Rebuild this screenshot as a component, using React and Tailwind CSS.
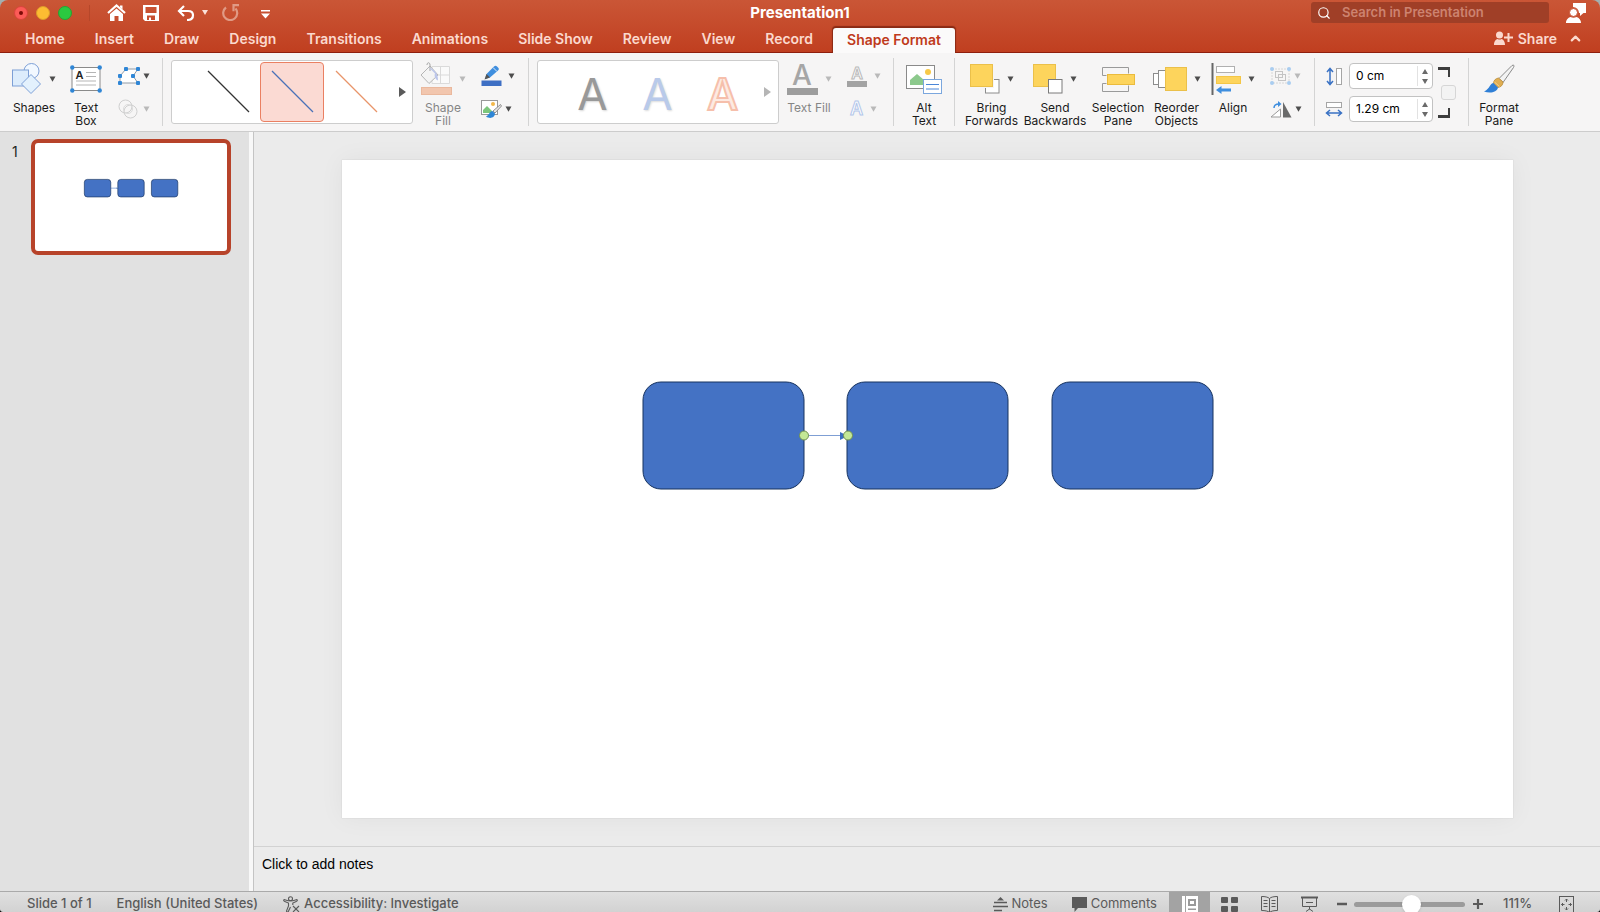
import { useState } from "react";
import { ChevronUp, Search } from "lucide-react";

const TABS = ["Home", "Insert", "Draw", "Design", "Transitions", "Animations", "Slide Show", "Review", "View", "Record"];

const BOXES = [301, 505, 710];

function Caret({ dim }) {
  return (
    <svg width="7" height="6" viewBox="0 0 7 6" className={dim ? "text-[#b9b9b9]" : "text-[#4d4d4d]"} aria-hidden>
      <path d="M0.5 0.5h6L3.5 5.8z" fill="currentColor" />
    </svg>
  );
}

function Separator() {
  return <div className="mt-[5px] h-[68px] w-px shrink-0 bg-[#d4d4d4]" />;
}

function RibbonButton({ icon, label, caret, disabled, className }) {
  return (
    <button disabled={disabled} className={`flex shrink-0 flex-col items-center pt-2 ${className}`}>
      <span className="flex h-9 items-center gap-[7px]">
        {icon}
        {caret && <Caret dim={disabled} />}
      </span>
      <span className={`mt-1 text-center text-[12px] leading-[13px] whitespace-pre ${disabled ? "text-[#858585]" : "text-[#1a1a1a]"}`}>
        {label}
      </span>
    </button>
  );
}

function SmallButton({ icon, label, disabled, tight }) {
  return (
    <button aria-label={label} disabled={disabled} className={`flex h-7 items-center ${tight ? "gap-[3px]" : "gap-[6px]"}`}>
      {icon}
      <Caret dim={disabled} />
    </button>
  );
}

/* ---------- ribbon icons ---------- */

function ShapesIcon() {
  return (
    <svg width="30" height="32" viewBox="0 0 30 32" fill="#f2f8ff" stroke="#7d9fd6">
      <circle cx="19.500" cy="8" r="7.500" />
      <rect x="0.500" y="7" width="16" height="16" fill="#dcecfc" />
      <path d="M19 11.500l9.500 9.500-9.500 9.500-9.500-9.500z" fill="#e3f1fd" />
    </svg>
  );
}

function TextBoxIcon() {
  return (
    <svg width="32" height="28" viewBox="0 0 32 28">
      <rect x="2" y="2.500" width="28" height="23" fill="#fff" stroke="#8a8a8a" />
      <path d="M16 7.500h10M16 11.500h10M6 16h20M6 20h20" stroke="#b5b5b5" />
      <text x="5.500" y="13.500" fontSize="11" fontWeight="600" fill="#222">A</text>
      <g fill="#2f86d6">
        <circle cx="2.300" cy="2.500" r="2.200" />
        <circle cx="29.700" cy="2.500" r="2.200" />
        <circle cx="2.300" cy="25.500" r="2.200" />
        <circle cx="29.700" cy="25.500" r="2.200" />
      </g>
    </svg>
  );
}

function EditPointsIcon() {
  return (
    <svg width="22" height="18" viewBox="0 0 22 18">
      <path d="M2 16V9l6-7h12l-5 7 5 7z" fill="#fff" stroke="#8f9aa6" />
      <g fill="#2f86d6">
        <rect x="0" y="14" width="4" height="4" rx="1" />
        <rect x="0" y="7" width="4" height="4" rx="1" />
        <rect x="6" y="0" width="4" height="4" rx="1" />
        <rect x="18" y="0" width="4" height="4" rx="1" />
        <rect x="13" y="7" width="4" height="4" rx="1" />
        <rect x="18" y="14" width="4" height="4" rx="1" />
      </g>
    </svg>
  );
}

function MergeIcon() {
  return (
    <svg width="22" height="20" viewBox="0 0 22 20" fill="none" stroke="#cfcfcf">
      <circle cx="7.500" cy="7.500" r="6.500" />
      <circle cx="12.500" cy="12.500" r="6.500" />
      <circle cx="10" cy="10" r="4.500" stroke="#dcdcdc" />
    </svg>
  );
}

function FillIcon() {
  return (
    <svg width="32" height="34" viewBox="0 0 32 34">
      <path d="M12 4.500h17.500v17H12zM12 13h17M20.500 4.500v17" fill="#fafafa" stroke="#dadada" />
      <path d="M1 13l9-9 8 9-9 8.500z" fill="#f4f4f4" stroke="#b5b5b5" />
      <path d="M10 9V3c0-3-3-3-3 0" fill="none" stroke="#a5a5a5" />
      <path d="M9 5.500c6 2 9 6 9 13-3-1-4-5-3-7z" fill="#bcc6ea" />
      <rect x="1.500" y="25.500" width="30" height="7" fill="#f2c6ae" stroke="#eab89d" />
    </svg>
  );
}

function OutlineIcon() {
  return (
    <svg width="21" height="22" viewBox="0 0 21 22">
      <path d="M4 14l1.500-5L13 1.500a2 2 0 0 1 3 0l1 1a2 2 0 0 1 0 3L9 12.500z" fill="#3f8ede" />
      <path d="M12 2.500l4 4" stroke="#dcecfb" />
      <path d="M3.500 14.500L5.500 9 9 12.500z" fill="#555" />
      <rect x="0.500" y="15.500" width="20" height="5.500" fill="#3e6fc4" />
    </svg>
  );
}

function PictureBrushIcon() {
  return (
    <svg width="21" height="21" viewBox="0 0 21 21">
      <rect x="0.500" y="1.500" width="16" height="14" fill="#fff" stroke="#999" />
      <path d="M2 14V11l4-4 5 5v2z" fill="#7cc67c" />
      <circle cx="12" cy="5" r="2" fill="#f2b84b" />
      <path d="M19.500 5.500L12 12l2 2 6.500-7z" fill="#e6e6e6" stroke="#777" strokeWidth="0.800" />
      <path d="M11.500 12c-3 0-3 4-6.500 5.500 4 3 9 1 9-3z" fill="#2f86d6" />
    </svg>
  );
}

function TextFillIcon() {
  return (
    <span className="flex w-8 flex-col items-center">
      <span className="text-[28px] leading-[25px] font-medium text-[#a6a6a6]">A</span>
      <span className="h-[7px] w-[31px] bg-[#9d9d9d]" />
    </span>
  );
}

function TextOutlineIcon() {
  return (
    <span className="flex w-[22px] flex-col items-center">
      <span className="text-[16px] leading-[16px] font-semibold text-white [-webkit-text-stroke:1px_#b9b9b9]">A</span>
      <span className="h-[6px] w-5 bg-[#a3a3a3]" />
    </span>
  );
}

function TextEffectsIcon() {
  return (
    <span className="w-[21px] text-center text-[18px] leading-[20px] font-semibold text-white [-webkit-text-stroke:1px_#b3c6ea]">A</span>
  );
}

function AltTextIcon() {
  return (
    <svg width="36" height="32" viewBox="0 0 36 32">
      <rect x="0.500" y="2.500" width="28" height="23" fill="#fff" stroke="#8a8a8a" />
      <path d="M4 22v-5l7-6 7 6v5z" fill="#8cc98c" />
      <circle cx="22" cy="9" r="3" fill="#f7c948" />
      <rect x="17.500" y="16.500" width="18" height="14" fill="#fff" stroke="#7ba7de" />
      <path d="M20 21.500h13M20 26h13" stroke="#4a86d8" />
    </svg>
  );
}

function BringIcon() {
  return (
    <svg width="30" height="30" viewBox="0 0 30 30">
      <rect x="15.500" y="15.500" width="13.500" height="13.500" fill="#fff" stroke="#8c8c8c" />
      <rect x="0" y="0" width="24" height="24" fill="#f6f5f5" />
      <rect x="0.500" y="0.500" width="22" height="22" fill="#fdd45c" stroke="#ebc04a" />
    </svg>
  );
}

function SendIcon() {
  return (
    <svg width="30" height="30" viewBox="0 0 30 30">
      <rect x="0.500" y="0.500" width="22" height="22" fill="#fdd45c" stroke="#ebc04a" />
      <rect x="15.500" y="15.500" width="13.500" height="13.500" fill="#fff" stroke="#7a7a7a" />
    </svg>
  );
}

function SelectionPaneIcon() {
  return (
    <svg width="34" height="28" viewBox="0 0 34 28">
      <path d="M1.500 10.500v-8h26v6M1.500 10.500h4M1.500 18.500v8h26v-6M1.500 18.500h4" fill="none" stroke="#9a9a9a" />
      <rect x="6.500" y="9.500" width="27" height="10" fill="#fdd45c" stroke="#ebbb3c" />
    </svg>
  );
}

function ReorderIcon() {
  return (
    <svg width="34" height="26" viewBox="0 0 34 26">
      <rect x="0.500" y="7.500" width="6" height="11" fill="#fff" stroke="#8c8c8c" />
      <rect x="5.500" y="4.500" width="7" height="17" fill="#fff" stroke="#8c8c8c" />
      <rect x="12.500" y="1.500" width="21" height="23" fill="#fdd45c" stroke="#ebc04a" />
    </svg>
  );
}

function AlignIcon() {
  return (
    <svg width="30" height="32" viewBox="0 0 30 32">
      <path d="M1.500 0v32" stroke="#666" strokeWidth="2" />
      <rect x="5.500" y="3.500" width="18" height="6" fill="#fff" stroke="#b0b0b0" />
      <rect x="5.500" y="13.500" width="24" height="7" fill="#fdd45c" stroke="#f4c646" />
      <path d="M5 27l5.500-4v2.500H20v3h-9.500V31z" fill="#3f8ede" />
    </svg>
  );
}

function GroupIcon() {
  return (
    <svg width="21" height="18" viewBox="0 0 21 18" fill="none">
      <rect x="2" y="2" width="17" height="14" stroke="#d6d6d6" strokeDasharray="2 1" />
      <rect x="5.500" y="4.500" width="7" height="6" stroke="#c4c4c4" />
      <rect x="8.500" y="7.500" width="7" height="6" stroke="#c4c4c4" />
      <g fill="#a9cdf0">
        <circle cx="2" cy="2" r="2" />
        <circle cx="19" cy="2" r="2" />
        <circle cx="2" cy="16" r="2" />
        <circle cx="19" cy="16" r="2" />
      </g>
    </svg>
  );
}

function RotateIcon() {
  return (
    <svg width="22" height="17" viewBox="0 0 22 17">
      <path d="M10.500 8v8H1z" fill="#fff" stroke="#9a9a9a" />
      <path d="M13 1v15.500h8.500z" fill="#6b6b6b" />
      <path d="M4 7c0-3 2-4 5-4" fill="none" stroke="#3f8ede" strokeWidth="1.500" />
      <path d="M8 0l3.500 3L8 6z" fill="#3f8ede" />
    </svg>
  );
}

function HeightIcon() {
  return (
    <svg width="18" height="19" viewBox="0 0 18 19">
      <rect x="11.500" y="1.500" width="5" height="16" fill="#fff" stroke="#a5a5a5" />
      <path d="M5 2v15M2 5l3-3.500L8 5M2 14l3 3.500L8 14" fill="none" stroke="#3a72c4" strokeWidth="1.500" />
    </svg>
  );
}

function WidthIcon() {
  return (
    <svg width="18" height="19" viewBox="0 0 18 19">
      <rect x="1.500" y="2.500" width="15" height="5" fill="#fff" stroke="#a5a5a5" />
      <path d="M1.500 13h15M5 10l-3.500 3L5 16M13 10l3.500 3-3.500 3" fill="none" stroke="#3a72c4" strokeWidth="1.500" />
    </svg>
  );
}

function FormatPaneIcon() {
  return (
    <svg width="32" height="30" viewBox="0 0 32 30">
      <path d="M29 1.500c2-1 2.500 0 1.500 2L20 18.500l-4-4z" fill="#f3f3f3" stroke="#8a8a8a" />
      <path d="M15.500 14c-3 .500-5 2.500-5 5.500l4.500 4c3-.500 5-2.500 5-5.500z" fill="#e0ae52" stroke="#b98a35" strokeWidth="0.800" />
      <path d="M10.500 19C7 19 7 25 1 27.500c6 2 13 1 14-4z" fill="#2f7fd6" />
      <path d="M11.500 18l5 4.500" stroke="#f5d28a" />
    </svg>
  );
}

/* ---------- window chrome ---------- */

function TitleBar() {
  return (
    <div className="grid h-[25px] grid-cols-[1fr_auto_1fr] items-center">
      <div className="flex h-6 items-center">
        <div className="ml-[14px] flex gap-2">
          <button aria-label="Close" className="flex size-[14px] items-center justify-center rounded-full border border-[#d9443c] bg-[#fc5b57]">
            <span className="size-1 rounded-full bg-[#7d0a06]" />
          </button>
          <button aria-label="Minimise" className="size-[14px] rounded-full border border-[#dc9a2c] bg-[#fdbc32]" />
          <button aria-label="Full screen" className="size-[14px] rounded-full border border-[#27a232] bg-[#2bc840]" />
        </div>
        <div className="ml-[17px] h-4 w-px bg-[#b6472a]" />
        <button aria-label="Home" className="ml-[17px]">
          <svg width="19" height="18" viewBox="0 0 19 18">
            <path d="M1 9l8.500-7.500L18 9" fill="none" stroke="#fff" strokeWidth="2.200" />
            <path d="M3 10l6.500-5.600L16 10v7h-4.500v-5h-4v5H3zM13 1.500h2.500v4L13 3.300z" fill="#fff" />
          </svg>
        </button>
        <button aria-label="Save" className="ml-[17px]">
          <svg width="16" height="16" viewBox="0 0 16 16">
            <path d="M0 0h16v16H2l-2-2zM2.500 2v6h11V2zM4 10.500V15h2v-2.500h2V15h4v-4.500z" fill="#fff" fillRule="evenodd" />
          </svg>
        </button>
        <button aria-label="Undo" className="ml-[18px] flex items-center gap-[7px]">
          <svg width="18" height="16" viewBox="0 0 18 16" fill="none" stroke="#fff" strokeWidth="2.200">
            <path d="M7 1L2 6l5 5" />
            <path d="M2 6h9c3 0 5 1.500 5 4.200S14 15 10 15" />
          </svg>
          <svg width="6" height="5" viewBox="0 0 6 5"><path d="M0 0h6L3 5z" fill="#fbe0d8" /></svg>
        </button>
        <button aria-label="Redo" disabled className="ml-[14px]">
          <svg width="18" height="17" viewBox="0 0 18 17" fill="none" stroke="#e09a85" strokeWidth="2.200">
            <path d="M4 3.500a7 7 0 1 0 9.500 1" />
            <path d="M17 1.200h-5.500v6" />
          </svg>
        </button>
        <button aria-label="Customise toolbar" className="mt-[3px] ml-[21px]">
          <svg width="9" height="9" viewBox="0 0 9 9"><path d="M0 0h9v1.500H0zM0 3.500h9L4.500 8.500z" fill="#fff" /></svg>
        </button>
      </div>
      <h1 className="text-[15px] leading-[24px] font-bold text-white">Presentation1</h1>
      <div className="flex items-center justify-end pr-[14px]">
        <label className="flex h-[21px] w-[238px] items-center rounded-[3px] bg-[#a03f27] pl-[6px]">
          <Search className="size-[14px] text-white" aria-hidden />
          <input
            type="search"
            aria-label="Search in Presentation"
            placeholder="Search in Presentation"
            className="ml-[11px] w-[190px] bg-transparent text-[13px] font-semibold text-white outline-none placeholder:text-[#cd8370]"
          />
        </label>
        <button aria-label="Account" className="ml-[17px]">
          <svg width="20" height="21" viewBox="0 0 20 21" fill="#fff">
            <path d="M7 1h13v10h-2.500L14 14v-3h-1A6 6 0 0 0 7 5z" />
            <circle cx="7.500" cy="10.500" r="4" stroke="#c74f30" />
            <path d="M0 21c0-4 3-5.500 4.500-6 2 1 4 1 6 0 1.500.500 4.500 2 4.500 6z" />
          </svg>
        </button>
      </div>
    </div>
  );
}

function TabBar() {
  return (
    <div className="flex h-7 items-end border-b border-[#8f1f0d]">
      <nav className="flex items-end pl-[10px] text-[14px] font-semibold text-[#fbd9ce]">
        {TABS.map((t) => (
          <button key={t} className="h-7 px-[15px] whitespace-nowrap">{t}</button>
        ))}
        <button className="-mb-px ml-[5px] h-[25px] rounded-t-[3px] bg-[#fbfafa] px-[14px] pb-[3px] whitespace-nowrap text-[#bf3a1c] shadow-[0_-1px_1px_1px_#8a2a14]">
          Shape Format
        </button>
      </nav>
      <div className="ml-auto flex h-7 items-center pr-[17px] text-[#fbd9ce]">
        <button className="flex items-center gap-[5px] text-[14px] font-semibold">
          <svg width="19" height="14" viewBox="0 0 19 14" fill="currentColor">
            <circle cx="5.500" cy="4" r="3.500" />
            <path d="M0 14c0-4 2-5.500 3.500-6 1.500.700 3 .700 4 0C9 8.500 11 10 11 14zM13.500 2h2v3.500H19v2h-3.500V11h-2V7.500H10v-2h3.500z" />
          </svg>
          Share
        </button>
        <button aria-label="Collapse ribbon" className="ml-[11px]">
          <ChevronUp className="size-[15px]" strokeWidth={3.5} />
        </button>
      </div>
    </div>
  );
}

function LineGallery() {
  const [picked, setPicked] = useState(1);
  const colors = ["#333333", "#4a72b8", "#e8956a"];
  return (
    <div className="mt-[7px] ml-2 flex h-16 w-[242px] shrink-0 items-center rounded-[3px] border border-[#cdcdcd] bg-white pl-6">
      {colors.map((c, i) => (
        <button
          key={c}
          aria-label={`Line style ${i + 1}`}
          onClick={() => setPicked(i)}
          className={`flex h-[60px] w-16 shrink-0 items-center justify-center rounded-[4px] border ${picked === i ? "border-[#ea8062] bg-[#fbdad3]" : "border-transparent"}`}
        >
          <svg width="44" height="44" viewBox="0 0 44 44">
            <path d="M2 1l41 41" stroke={c} strokeWidth="1.200" />
          </svg>
        </button>
      ))}
      <button aria-label="More line styles" className="ml-[11px]">
        <svg width="7" height="10" viewBox="0 0 7 10"><path d="M0 0l7 5-7 5z" fill="#5a5a5a" /></svg>
      </button>
    </div>
  );
}

function WordArtGallery() {
  return (
    <div className="mt-[7px] ml-2 flex h-16 w-[242px] shrink-0 items-center rounded-[3px] border border-[#cdcdcd] bg-white pl-[22px] text-[44px] leading-none">
      <button disabled className="w-[65px] pt-1 text-[#999999] [text-shadow:1px_1px_2px_#d5d5d5]">A</button>
      <button disabled className="w-[65px] pt-1 text-[#b9caea] [text-shadow:1px_1px_2px_#dcdcdc]">A</button>
      <button disabled className="w-[65px] pt-1 font-medium text-[#fdeae2] [-webkit-text-stroke:2px_#f6bfab]">A</button>
      <button aria-label="More text styles" disabled className="ml-[9px]">
        <svg width="7" height="10" viewBox="0 0 7 10"><path d="M0 0l7 5-7 5z" fill="#b5b5b5" /></svg>
      </button>
    </div>
  );
}

function SizeField({ icon, label, initial }) {
  const [value, setValue] = useState(initial);
  return (
    <div className="flex items-center gap-[6px]">
      {icon}
      <div className="flex h-[26px] w-[84px] rounded-[4px] border border-[#c2c2c2] bg-white">
        <input
          aria-label={label}
          value={value}
          onChange={(e) => setValue(e.target.value)}
          className="w-[67px] bg-transparent pl-[6px] text-[12px] text-black outline-none"
        />
        <div className="my-[2px] flex w-[15px] flex-col items-center justify-around border-l border-[#e2e2e2]">
          <button aria-label={`Increase ${label}`}>
            <svg width="6" height="5" viewBox="0 0 6 5" className="block"><path d="M0 5h6L3 0z" fill="#6a6a6a" /></svg>
          </button>
          <button aria-label={`Decrease ${label}`}>
            <svg width="6" height="5" viewBox="0 0 6 5" className="block"><path d="M0 0h6L3 5z" fill="#6a6a6a" /></svg>
          </button>
        </div>
      </div>
    </div>
  );
}

function Ribbon() {
  return (
    <div className="flex h-[79px] items-start border-b border-[#cccccc] bg-[#f6f5f5]">
      <RibbonButton icon={<ShapesIcon />} label="Shapes" caret className="ml-[5px] w-[58px]" />
      <RibbonButton icon={<TextBoxIcon />} label={"Text\nBox"} className="w-[46px]" />
      <div className="flex w-[53px] shrink-0 flex-col gap-[5px] pt-[9px] pl-[9px]">
        <SmallButton icon={<EditPointsIcon />} label="Edit shape" tight />
        <SmallButton icon={<MergeIcon />} label="Merge shapes" disabled tight />
      </div>
      <Separator />
      <LineGallery />
      <RibbonButton icon={<FillIcon />} label={"Shape\nFill"} caret disabled className="w-[60px]" />
      <div className="flex w-[55px] shrink-0 flex-col gap-[5px] pt-[9px] pl-2">
        <SmallButton icon={<OutlineIcon />} label="Shape outline" />
        <SmallButton icon={<PictureBrushIcon />} label="Shape effects" tight />
      </div>
      <Separator />
      <WordArtGallery />
      <RibbonButton icon={<TextFillIcon />} label="Text Fill" caret disabled className="w-[60px]" />
      <div className="flex w-[54px] shrink-0 flex-col gap-[5px] pt-[9px] pl-[7px]">
        <SmallButton icon={<TextOutlineIcon />} label="Text outline" disabled />
        <SmallButton icon={<TextEffectsIcon />} label="Text effects" disabled tight />
      </div>
      <Separator />
      <RibbonButton icon={<AltTextIcon />} label={"Alt\nText"} className="w-[60px]" />
      <Separator />
      <RibbonButton icon={<BringIcon />} label={"Bring\nForwards"} caret className="ml-[6px] w-[61px]" />
      <RibbonButton icon={<SendIcon />} label={"Send\nBackwards"} caret className="w-[66px]" />
      <RibbonButton icon={<SelectionPaneIcon />} label={"Selection\nPane"} className="w-[60px]" />
      <RibbonButton icon={<ReorderIcon />} label={"Reorder\nObjects"} caret className="w-[57px]" />
      <RibbonButton icon={<AlignIcon />} label="Align" caret className="w-[56px]" />
      <div className="flex w-[53px] shrink-0 flex-col gap-[5px] pt-[9px] pl-[9px]">
        <SmallButton icon={<GroupIcon />} label="Group" disabled tight />
        <SmallButton icon={<RotateIcon />} label="Rotate" tight />
      </div>
      <Separator />
      <div className="flex w-[153px] shrink-0 gap-[5px] pt-[10px] pl-[10px]">
        <div className="flex flex-col gap-[7px]">
          <SizeField icon={<HeightIcon />} label="Height" initial="0 cm" />
          <SizeField icon={<WidthIcon />} label="Width" initial="1.29 cm" />
        </div>
        <div className="mt-1 flex flex-col">
          <div className="h-[10px] w-3 border-t-[3px] border-r-2 border-[#3d3d3d]" />
          <input
            type="checkbox"
            aria-label="Lock aspect ratio"
            className="my-2 ml-[3px] size-[15px] appearance-none rounded-[3px] border border-[#d6d6d6] bg-[#f3f3f3]"
          />
          <div className="h-[10px] w-3 border-r-2 border-b-[3px] border-[#3d3d3d]" />
        </div>
      </div>
      <Separator />
      <RibbonButton icon={<FormatPaneIcon />} label={"Format\nPane"} className="w-[60px]" />
    </div>
  );
}

/* ---------- slide ---------- */

function SlideDrawing({ selected }) {
  return (
    <svg viewBox="0 0 1171 658" className="block w-full" aria-label="Three boxes joined by a connector">
      <path d="M462 275.500h38" stroke="#7f9fd4" strokeWidth={selected ? 1 : 5} />
      <path d="M498 272l8 4-8 4z" fill="#3b6fc0" />
      {BOXES.map((x) => (
        <rect key={x} x={x} y="222" width="161" height="107" rx="18" fill="#4472c4" stroke="#17335f" strokeWidth={selected ? 1 : 4} />
      ))}
      {selected && (
        <g fill="#c3e896" stroke="#6f8f52">
          <circle cx="462" cy="275.500" r="4.500" />
          <circle cx="506" cy="275.500" r="4.500" />
        </g>
      )}
    </svg>
  );
}

function Workspace() {
  return (
    <div className="flex flex-1">
      <aside className="w-[249px] shrink-0 bg-[#e1e1e1]">
        <div className="flex pt-[7px]">
          <span className="w-[31px] pt-[3px] pl-3 text-[14px] leading-[20px] text-[#222]">1</span>
          <button aria-label="Slide 1" className="w-[200px] overflow-hidden rounded-[7px] border-[4px] border-[#b7432a] bg-white">
            <SlideDrawing />
          </button>
        </div>
      </aside>
      <div className="w-[5px] shrink-0 border-r border-[#c4c4c4] bg-[#f8f8f8]" />
      <div className="flex min-w-0 flex-1 flex-col bg-[#ebebeb]">
        <main className="flex-1 pt-7 pr-[87px] pb-[27px] pl-[88px]">
          <div className="bg-white shadow-[0_0_1px_#bbbbbb,0_0_24px_rgba(0,0,0,0.05)]">
            <SlideDrawing selected />
          </div>
        </main>
        <div className="h-[45px] border-t border-[#d2d2d2] pt-[7px] pl-2">
          <textarea
            aria-label="Notes"
            placeholder="Click to add notes"
            rows={1}
            className="block w-full resize-none bg-transparent font-['Liberation_Sans',Arial,sans-serif] text-[14px] leading-[20px] outline-none placeholder:text-black"
          />
        </div>
      </div>
    </div>
  );
}

/* ---------- status bar ---------- */

function StatusBar() {
  const [zoom, setZoom] = useState(52);
  return (
    <footer className="h-[21px] overflow-hidden border-t border-[#aaaaaa] bg-linear-to-b from-[#e0e0e0] to-[#d2d2d2] text-[13px] text-[#5a5a5a]">
      <div className="flex h-6 items-center whitespace-nowrap">
        <div className="flex items-center gap-[25px] pl-[27px] font-medium">
          <span>Slide 1 of 1</span>
          <button>English (United States)</button>
          <button className="flex items-center gap-1">
            <svg width="17" height="17" viewBox="0 0 17 17" fill="none" stroke="currentColor" strokeWidth="1.100">
              <circle cx="7.500" cy="2.800" r="2" />
              <path d="M1 3.500c-.800 1 0 1.600.800 1.900L5.500 7v3L3.500 15c0 1.200 1.400 1.400 1.800.500L7.500 11M14 3.500c.800 1 0 1.600-.800 1.900L9.800 7v2M1 3.500l4 1.300h5l4-1.300M10 10l6 6M16 10l-6 6" />
            </svg>
            Accessibility: Investigate
          </button>
        </div>
        <div className="ml-auto flex h-6 items-center">
          <button className="flex items-center gap-1">
            <svg width="15" height="16" viewBox="0 0 15 16">
              <path d="M4 4.500L7.500 1 11 4.500z" fill="currentColor" />
              <path d="M1 6.500h13M0 10.500h15M1 14.500h8" stroke="currentColor" strokeWidth="1.500" />
            </svg>
            Notes
          </button>
          <button className="ml-6 flex items-center gap-1">
            <svg width="15" height="15" viewBox="0 0 15 15"><path d="M0 0h15v11H6l-3.500 4v-4H0z" fill="currentColor" /></svg>
            Comments
          </button>
          <button aria-label="Normal view" className="ml-3 flex h-6 w-[41px] items-center justify-center bg-[#a3a3a3]">
            <svg width="16" height="17" viewBox="0 0 16 17">
              <path d="M0 0h16v17H0z" fill="#fff" />
              <path d="M3.500 0v17" stroke="#a3a3a3" />
              <path d="M6 3h8v7H6zM6 12.500h8V14H6z" fill="#9a9a9a" />
              <path d="M8 5h4v3H8z" fill="#fff" />
            </svg>
          </button>
          <button aria-label="Slide sorter" className="ml-[11px]">
            <svg width="17" height="15" viewBox="0 0 17 15" fill="currentColor">
              <rect width="7" height="6" rx="1" />
              <rect x="10" width="7" height="6" rx="1" />
              <rect y="9" width="7" height="6" rx="1" />
              <rect x="10" y="9" width="7" height="6" rx="1" />
            </svg>
          </button>
          <button aria-label="Reading view" className="ml-[23px]">
            <svg width="17" height="17" viewBox="0 0 17 17" fill="none" stroke="currentColor">
              <path d="M8.500 2.500C7 1 4 .500.500.500v14c3.500 0 6.500.500 8 2 1.500-1.500 4.500-2 8-2V.500c-3.500 0-6.500.500-8 2zv14" />
              <path d="M2.500 4.500h4M2.500 7.500h4M2.500 10.500h4M10.500 4.500h4M10.500 7.500h4M10.500 10.500h4" />
            </svg>
          </button>
          <button aria-label="Slide show" className="ml-[23px]">
            <svg width="17" height="16" viewBox="0 0 17 16" fill="none" stroke="currentColor">
              <path d="M0 1.500h17" strokeWidth="2" />
              <path d="M1.500 2v8.500h14V2M5 6.500h7M8.500 10.500v3M5 15.500l3.500-2.500 3.500 2.500" />
            </svg>
          </button>
          <button aria-label="Zoom out" className="ml-[19px]">
            <svg width="10" height="10" viewBox="0 0 10 10"><path d="M0 5h10" stroke="currentColor" strokeWidth="2.500" /></svg>
          </button>
          <input
            type="range"
            aria-label="Zoom"
            min="0"
            max="100"
            value={zoom}
            onChange={(e) => setZoom(Number(e.target.value))}
            className="ml-[7px] h-[5px] w-[111px] appearance-none rounded-full bg-[#9b9b9b] [&::-webkit-slider-thumb]:size-[19px] [&::-webkit-slider-thumb]:appearance-none [&::-webkit-slider-thumb]:rounded-full [&::-webkit-slider-thumb]:bg-white [&::-webkit-slider-thumb]:shadow-sm"
          />
          <button aria-label="Zoom in" className="ml-2">
            <svg width="10" height="10" viewBox="0 0 10 10"><path d="M0 5h10M5 0v10" stroke="currentColor" strokeWidth="2.200" /></svg>
          </button>
          <button className="ml-5 w-8 text-left font-medium">111%</button>
          <button aria-label="Fit slide to window" className="mr-[26px] ml-6">
            <svg width="15" height="17" viewBox="0 0 15 17" fill="none" stroke="currentColor">
              <rect x="0.500" y="0.500" width="14" height="16" />
              <path d="M7.500 3v3M6 4.500L7.500 3 9 4.500M7.500 14v-3M6 12.500L7.500 14 9 12.500M2.500 8.500h3M4 7L2.500 8.500 4 10M12.500 8.500h-3M11 7l1.500 1.500L11 10" />
            </svg>
          </button>
        </div>
      </div>
    </footer>
  );
}

export default function App() {
  return (
    <div className="bg-linear-to-b from-[#a3b0b0] to-black font-['Inter','Noto_Sans',sans-serif]">
      <div className="flex min-h-screen flex-col overflow-hidden rounded-t-[8px] rounded-b-[3px]">
        <header className="bg-linear-to-b from-[#ca5636] to-[#c03e1f]">
          <TitleBar />
          <TabBar />
        </header>
        <Ribbon />
        <Workspace />
        <StatusBar />
      </div>
    </div>
  );
}
